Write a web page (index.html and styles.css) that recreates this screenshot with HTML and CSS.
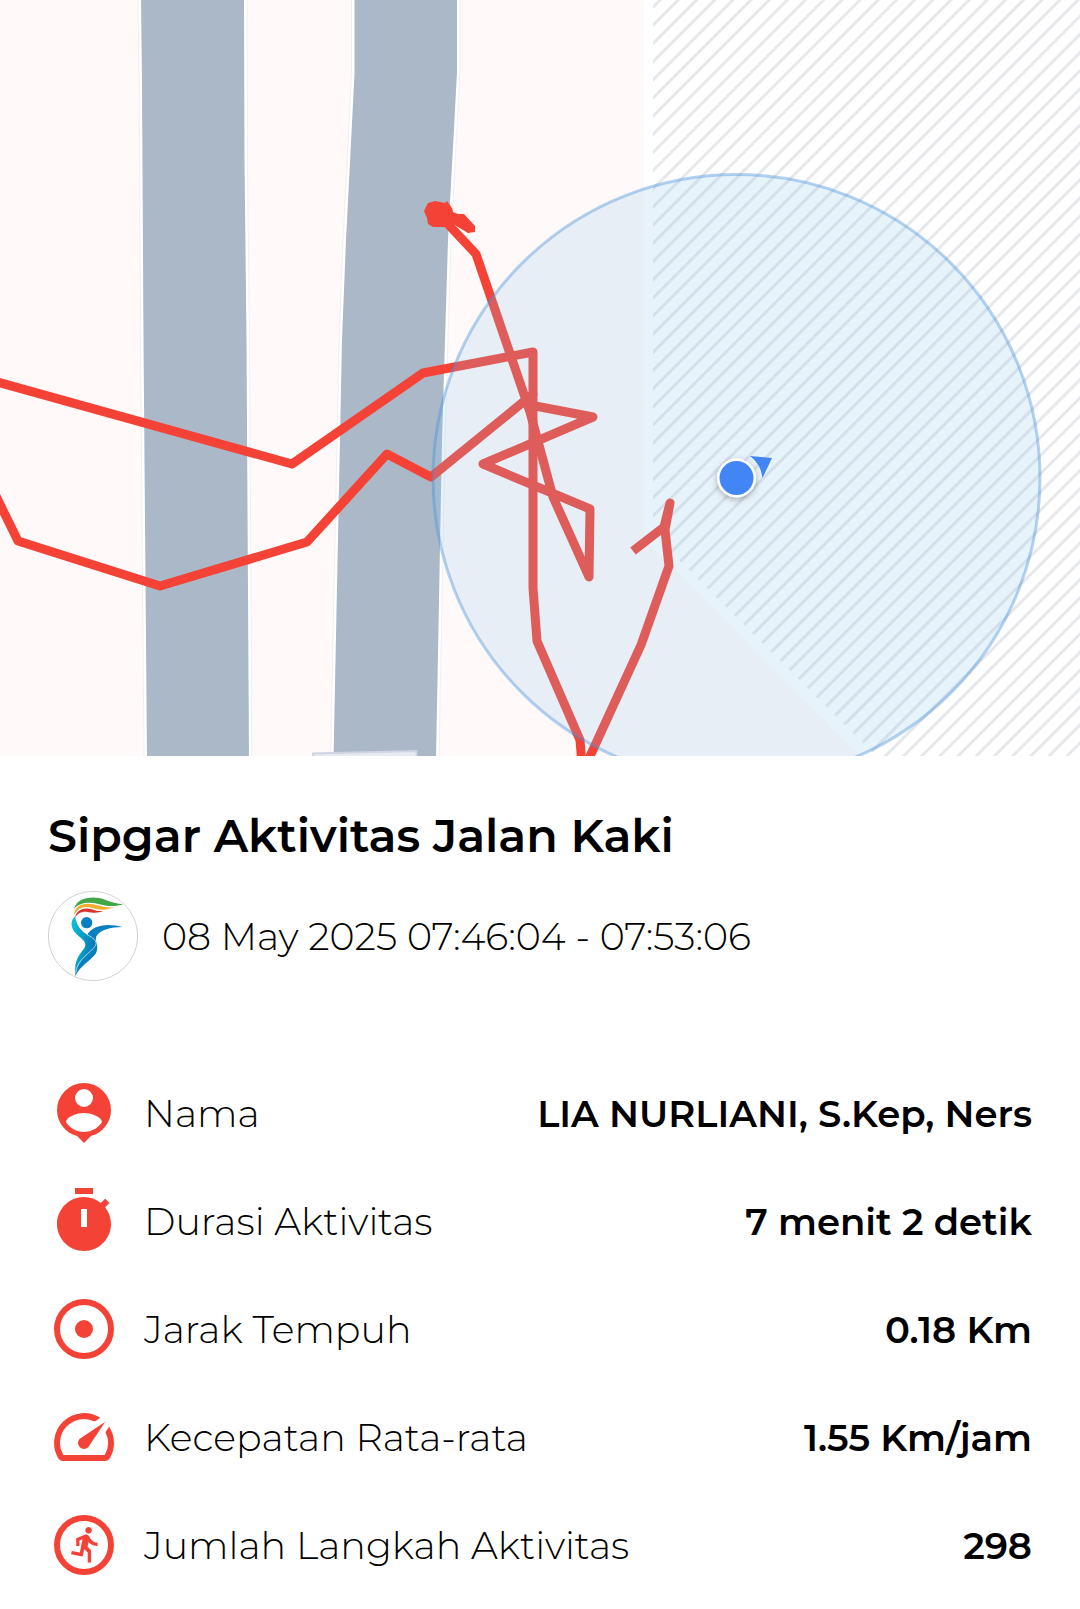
FILE: index.html
```html
<!DOCTYPE html>
<html lang="id">

<head>
    <meta charset="UTF-8">
    <meta name="viewport" content="width=device-width, initial-scale=1.0">
    <title>Sipgar Aktivitas Jalan Kaki</title>
    <link rel="stylesheet" href="styles.css">
</head>

<body>
    <div class="map">
        <svg viewBox="0 0 1080 756" role="img" aria-label="Peta rute jalan kaki">
            <defs>
                <pattern id="hatch" width="12.85" height="20" patternUnits="userSpaceOnUse" patternTransform="translate(658 0) rotate(45)">
                    <rect class="hatch-line" width="3" height="20" />
                </pattern>
                <filter id="dot-shadow" x="-50%" y="-50%" width="200%" height="200%">
                    <feDropShadow dx="0" dy="2" stdDeviation="3" flood-opacity="0.3" />
                </filter>
            </defs>

            <rect class="land" width="1080" height="756" />
            <path class="area" d="M644 0H1080V756H860L700 594L644 540Z" />
            <path fill="url(#hatch)" d="M653 0H1080V756H876L705 586L653 534Z" />

            <!-- roads -->
            <path class="road-border" d="M141 -5L142 84L143.500 340L147 760H249L246.500 340L244.500 160L244 -5Z" />
            <path class="road-border" d="M354.500 -5V74L346 240L342 340L333.500 760H436L442 440L448 240L457 72V-5Z" />
            <path class="road-edge" d="M141 -5L142 84L143.500 340L147 760H249L246.500 340L244.500 160L244 -5Z" />
            <path class="road-edge" d="M354.500 -5V74L346 240L342 340L333.500 760H436L442 440L448 240L457 72V-5Z" />
            <path class="road" d="M141 -5L142 84L143.500 340L147 760H249L246.500 340L244.500 160L244 -5Z" />
            <path class="road" d="M354.500 -5V74L346 240L342 340L333.500 760H436L442 440L448 240L457 72V-5Z" />
            <path class="building" d="M313 760V753.500L416.500 751V760" />

            <!-- route -->
            <g class="route">
                <path d="M-10 380L292 464L423 373L533 352V588L537 641L580 740L582 765" />
                <path d="M-8 488L18 541L160 586L307 542L387 454L431 477L533 394L530 405L593 417L483 464L590 509L589 577L553 497L530 412L476 254L446 222" />
                <path d="M633 551L664 527L670 503L665 530L669 566L641 645L586 765" />
            </g>
            <path class="route-start" d="M424 211L428 203L435 201L445 203L447 201L452 208L453 212L458 214L464 214L475 226V232L468 233L453 224L445 227H433L428 224L427 218Z" />

            <!-- current position -->
            <circle class="accuracy" cx="736.500" cy="478" r="303.500" />
            <path class="position" d="M750 456L772 458L762.500 478Q761 464 750 456Z" />
            <circle class="position-ring" cx="736.500" cy="478" r="19.500" filter="url(#dot-shadow)" />
            <circle class="position" cx="736.500" cy="478" r="17" />
        </svg>
    </div>

    <main class="content">
        <h1>Sipgar Aktivitas Jalan Kaki</h1>
        <div class="date">
            <svg class="avatar" viewBox="54 273 270 270" aria-hidden="true">
                <defs>
                    <linearGradient id="teal" x1="0" y1="0" x2="1" y2="0.3">
                        <stop offset="0" stop-color="#0bc4d6" />
                        <stop offset="1" stop-color="#0878b5" />
                    </linearGradient>
                </defs>
                <circle cx="189" cy="408" r="134" fill="#fff" stroke="#bbb" stroke-width="2" />
                <path fill="#45a648" d="M133 326C139 294 188 285 225 299C245 307 262 311 280 313C254 322 228 318 205 312C175 304 147 309 133 326Z" />
                <path fill="#f2ad2e" d="M132 346C133 317 160 307 190 313C215 319 230 324 252 322C226 333 205 329 185 323C160 317 142 325 132 346Z" />
                <path fill="#dc342d" d="M135 353C139 329 164 321 185 328C199 333 209 334 220 333C201 341 187 338 170 335C153 334 143 340 135 353Z" />
                <circle cx="170" cy="368" r="17" fill="#0580c1" />
                <path fill="#087fbe" d="M171 405C187 377 228 367 278 381C241 382 211 388 199 409C193 426 209 433 198 460C182 483 151 497 136 528C133 491 157 464 185 439C190 429 190 420 171 405Z" />
                <path fill="url(#teal)" d="M135 349C140 384 161 398 180 410C194 419 201 427 196 437C179 461 145 475 136 520C132 483 147 465 162 446C170 433 166 425 152 413C118 389 120 363 135 349Z" />
                <path fill="none" stroke="#fff" stroke-width="2" d="M170 403C190 414 202 422 197 436C180 462 144 474 137 518" />
            </svg>
            <time datetime="2025-05-08T07:46:04">08 May 2025 07:46:04 - 07:53:06</time>
        </div>

        <dl class="details">
            <div class="row">
                <dt>
                    <svg class="icon" viewBox="0 0 24 24" aria-hidden="true">
                        <path d="M12 2a9 9 0 0 0-9 9c0 4.170 2.840 7.670 6.690 8.690L12 22l2.310-2.310C18.160 18.670 21 15.170 21 11a9 9 0 0 0-9-9zm0 2a3 3 0 1 1 0 6 3 3 0 0 1 0-6zm0 14.300c-2.500 0-4.710-1.280-6-3.220.030-1.990 4-3.080 6-3.080s5.970 1.090 6 3.080a7.200 7.200 0 0 1-6 3.220z" />
                    </svg>
                    Nama
                </dt>
                <dd>LIA NURLIANI, S.Kep, Ners</dd>
            </div>
            <div class="row">
                <dt>
                    <svg class="icon" viewBox="0 0 24 24" aria-hidden="true">
                        <path d="M15 1H9v2h6V1zm-4 13h2V8h-2v6zm8.030-6.610l1.420-1.420c-.43-.51-.9-.99-1.410-1.410l-1.420 1.420C16.070 4.740 14.120 4 12 4c-4.970 0-9 4.030-9 9s4.020 9 9 9 9-4.030 9-9c0-2.120-.74-4.070-1.970-5.610z" />
                    </svg>
                    Durasi Aktivitas
                </dt>
                <dd>7 menit 2 detik</dd>
            </div>
            <div class="row">
                <dt>
                    <svg class="icon" viewBox="0 0 24 24" aria-hidden="true">
                        <circle class="ring" cx="12" cy="12" r="9" />
                        <circle cx="12" cy="12" r="3" />
                    </svg>
                    Jarak Tempuh
                </dt>
                <dd>0.18 Km</dd>
            </div>
            <div class="row">
                <dt>
                    <svg class="icon" viewBox="0 0 24 24" aria-hidden="true">
                        <path d="M20.380 8.570l-1.230 1.850a8 8 0 0 1-.22 7.580H5.070A8 8 0 0 1 15.580 6.850l1.850-1.230A10 10 0 0 0 3.350 19a2 2 0 0 0 1.720 1h13.850a2 2 0 0 0 1.740-1 10 10 0 0 0-.27-10.440zm-9.790 6.840a2 2 0 0 0 2.830 0l5.660-8.490-8.490 5.660a2 2 0 0 0 0 2.830z" />
                    </svg>
                    Kecepatan Rata-rata
                </dt>
                <dd>1.55 Km/jam</dd>
            </div>
            <div class="row">
                <dt>
                    <svg class="icon" viewBox="0 0 24 24" aria-hidden="true">
                        <circle class="ring" cx="12" cy="12" r="9" />
                        <path transform="translate(6.100 5.200) scale(0.550)" d="M13.490 5.480c1.100 0 2-.9 2-2s-.9-2-2-2-2 .9-2 2 .9 2 2 2zm-3.600 13.900l1-4.400 2.100 2v6h2v-7.500l-2.100-2 .6-3c1.300 1.500 3.300 2.500 5.500 2.500v-2c-1.900 0-3.500-1-4.300-2.400l-1-1.600c-.4-.6-1-1-1.700-1-.3 0-.5.1-.8.1l-5.200 2.200v4.700h2v-3.400l1.800-.7-1.600 8.100-4.900-1-.4 2 7 1.400z" />
                    </svg>
                    Jumlah Langkah Aktivitas
                </dt>
                <dd>298</dd>
            </div>
        </dl>
    </main>
</body>

</html>
```
FILE: styles.css
```css
body {
    margin: 0;
    font-family: Montserrat, Inter, sans-serif;
    font-size: 38px;
    font-weight: 300;
    color: #000;
    background-color: #fff;
}

.map svg {
    display: block;
    width: 100%;
    height: auto;
}

.land {
    fill: #fff9f9;
}

.area {
    fill: #fff;
}

.hatch-line {
    fill: #e6e8eb;
}

.road {
    fill: #abb8c8;
}

.road-edge {
    fill: #fff;
    stroke: #fff;
    stroke-width: 5;
}

.road-border {
    fill: none;
    stroke: #f0eff0;
    stroke-width: 7;
}

.building {
    fill: #e8eaf0;
    stroke: #d0d3e2;
    stroke-width: 2;
}

.route path {
    fill: none;
    stroke: #f44336;
    stroke-width: 9;
    stroke-linejoin: round;
}

.route-start {
    fill: #f44336;
}

.accuracy {
    fill: rgba(134, 197, 236, 0.2);
    stroke: rgba(70, 145, 220, 0.4);
    stroke-width: 3;
}

.position {
    fill: #4285f4;
}

.position-ring {
    fill: #fff;
}

.content {
    padding: 48px 48px 10px;
}

h1 {
    margin: 0;
    font-size: 46px;
    font-weight: 600;
    line-height: 64px;
}

.date {
    display: flex;
    align-items: center;
    gap: 24px;
    margin-top: 23px;
}

.avatar {
    flex: none;
    width: 90px;
    height: 90px;
}

.details {
    margin: 78px 0 0;
}

.row {
    display: flex;
    align-items: center;
    justify-content: space-between;
    gap: 24px;
    min-height: 108px;
}

.row dt {
    display: flex;
    align-items: center;
    gap: 24px;
}

.row dd {
    margin: 0;
    font-size: 37px;
    font-weight: 600;
    text-align: right;
}

.icon {
    flex: none;
    width: 72px;
    height: 72px;
    fill: #f44336;
    fill-rule: evenodd;
}

.ring {
    fill: none;
    stroke: #f44336;
    stroke-width: 2;
}
```
